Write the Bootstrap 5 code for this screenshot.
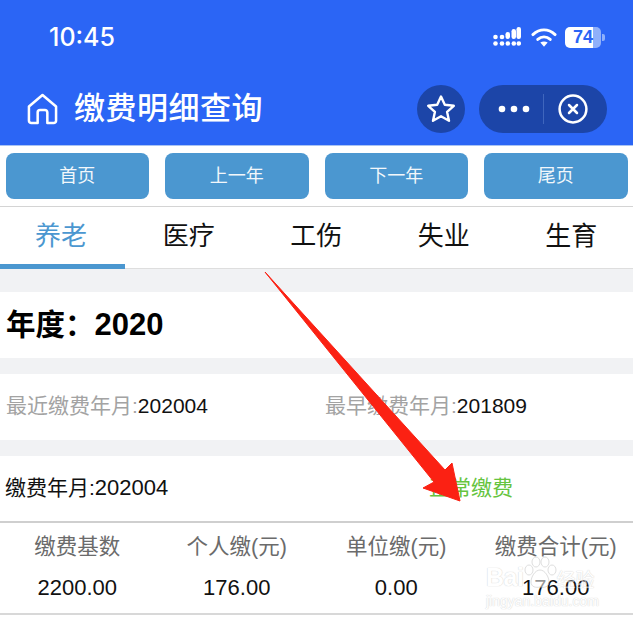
<!DOCTYPE html>
<html lang="zh-CN">
<head>
    <meta charset="UTF-8">
    <meta name="viewport" content="width=device-width, initial-scale=1.0">
    <title>缴费明细查询</title>
    <link href="https://cdn.jsdelivr.net/npm/bootstrap@5.3.0/dist/css/bootstrap.min.css" rel="stylesheet">
    <style>
        html, body { margin: 0; background: #fff; }
        body { font-family: "Liberation Sans", "Noto Sans CJK SC", sans-serif; color: #111; overflow: hidden; }
        .page-wrap { width: 633px; height: 624px; overflow: hidden; }
        .top-blue { height: 145px; background: #2b65f5; color: #fff; }
        .status-row { height: 74px; padding: 21px 28px 0 49px; }
        .clock { font-family: "Inter", "Liberation Sans", sans-serif; font-size: 25px; line-height: 32px; font-weight: 500; }
        .signal-ico { margin-right: 2px; }
        .battery { width: 36px; height: 21px; border-radius: 5px; background: linear-gradient(90deg, #fff 0, #fff 78%, #8fb0fa 78%); color: #2b65f5; font-size: 18px; line-height: 21px; font-weight: 700; text-align: center; }
        .battery-tip { width: 3px; height: 7px; background: #8fb0fa; border-radius: 0 2px 2px 0; margin-left: 1px; }
        .title-row { height: 71px; padding: 0 26px 1px 27px; }
        .page-name { font-size: 31px; line-height: 50px; font-weight: 500; margin-left: 16px; letter-spacing: .5px; }
        .fav-pill { width: 48px; height: 48px; border-radius: 50%; background: #1c45a8; }
        .menu-pill { width: 128px; height: 48px; border-radius: 24px; background: #1c45a8; margin-left: 14px; padding: 0 19px 0 19px; }
        .pill-sep { width: 1px; height: 30px; background: #3f66bd; margin: 0 14px 0 13px; }
        .tool-btns { height: 62px; padding: 7px 5.500px 0 5.500px; border-top: 1px solid #a9c3f3; border-bottom: 1px solid #d4d4d4; }
        .tool-btn { width: 143.500px; height: 46px; line-height: 46px; padding: 0; border: 0; border-radius: 8px; background: #4b97d0; color: #f2f7fb; font-size: 18px; text-align: center; }
        .tab-row { height: 62px; border-bottom: 1px solid #dedede; }
        .tab-cell { flex: 0 0 127.500px; font-size: 26px; line-height: 58px; text-align: center; color: #111; }
        .tab-cell.on { flex-basis: 125px; height: 62px; color: #4b97d0; border-bottom: 5px solid #4b97d0; padding-right: 3px; }
        .gap-band { background: #f1f2f4; }
        .gap-a { height: 23px; }
        .gap-b { height: 16px; }
        .year-row { height: 66px; padding-left: 6px; font-size: 29.500px; line-height: 66px; font-weight: 700; color: #000; }
        .year-num { font-size: 31px; }
        .month-row { height: 66px; padding: 17px 0 0 6px; font-size: 21px; line-height: 30px; color: #111; }
        .month-row > div { flex: 0 0 319px; }
        .dim-text { color: #a3a3a3; }
        .pay-row { height: 65px; padding: 17px 0 0 5px; font-size: 21px; line-height: 30px; color: #111; }
        .pay-num { font-size: 22px; }
        .pay-date { flex: 0 0 424px; }
        .pay-state { color: #66c43f; font-size: 21px; }
        .fee-table { height: 94px; border-top: 2px solid #cfcfcf; border-bottom: 2px solid #d8d8d8; font-size: 21.500px; }
        .fee-col { flex: 0 0 159.500px; text-align: center; white-space: nowrap; }
        .fee-col:first-child { margin-left: -2.500px; }
        .fee-head { color: #6b6b6b; line-height: 30px; padding-top: 9px; height: 46px; }
        .fee-val { color: #111; line-height: 30px; font-size: 22px; padding-top: 4px; }
        .arrow-over { position: absolute; left: 0; top: 0; pointer-events: none; }
        .mark-over { position: absolute; left: 486px; top: 556px; width: 114px; color: #fff; pointer-events: none; line-height: 1; text-shadow: 0 0 1px #bbb, 0 0 1px #bbb; opacity: .55; }
        .mark-big { font-size: 25px; font-weight: 700; letter-spacing: -.5px; margin-right: -2px; }
        .mark-cn { font-size: 19px; margin-left: -1px; }
        .mark-small { font-size: 14px; margin-top: 4px; white-space: nowrap; }
    </style>
</head>
<body>
    <div class="page-wrap position-relative">
        <div class="top-blue">
            <div class="status-row d-flex justify-content-between">
                <div class="clock">10:45</div>
                <div class="d-flex align-items-center" style="height: 32px">
                    <svg class="signal-ico" width="28" height="22" viewBox="0 0 28 22" fill="#fff">
                        <circle cx="2.500" cy="11" r="2.300"/><circle cx="2.500" cy="17.500" r="2.300"/>
                        <circle cx="9" cy="11" r="2.300"/><circle cx="9" cy="17.500" r="2.300"/>
                        <rect x="12.500" y="6" width="4.500" height="7" rx="2.200"/><circle cx="14.800" cy="17.500" r="2.300"/>
                        <rect x="18.500" y="3" width="4.500" height="10" rx="2.200"/><circle cx="20.800" cy="17.500" r="2.300"/>
                        <rect x="23.500" y="1" width="4.500" height="12" rx="2.200"/><circle cx="25.800" cy="17.500" r="2.300"/>
                    </svg>
                    <svg class="ms-2" width="26" height="21" viewBox="0 0 27 21" fill="none" stroke="#fff" stroke-width="3" stroke-linecap="round">
                        <path d="M2 7.500C9 1 18 1 25 7.500"/>
                        <path d="M7 12.500C11 9 16 9 20 12.500"/>
                        <path d="M13.500 20l-3.800-4.200c2.300-1.600 5.300-1.600 7.600 0z" fill="#fff" stroke="none"/>
                    </svg>
                    <div class="battery ms-2">74</div>
                    <div class="battery-tip"></div>
                </div>
            </div>
            <div class="title-row d-flex align-items-center">
                <svg width="31" height="32" viewBox="0 0 32 33" fill="none" stroke="#fff" stroke-width="2.600" stroke-linejoin="round" stroke-linecap="round">
                    <path d="M2 14L16 2l14 12v14.500a2.500 2.500 0 0 1-2.500 2.500H21V20a2.500 2.500 0 0 0-2.500-2.500h-5A2.500 2.500 0 0 0 11 20v11H4.500A2.500 2.500 0 0 1 2 28.500z"/>
                </svg>
                <div class="page-name">缴费明细查询</div>
                <div class="ms-auto d-flex">
                    <div class="fav-pill d-flex align-items-center justify-content-center">
                        <svg width="30" height="30" viewBox="0 0 30 30" fill="none" stroke="#fff" stroke-width="2.400" stroke-linejoin="round">
                            <path d="M15 2.500l3.800 8.300 9 1-6.700 6.100 1.900 8.900-8-4.500-8 4.500 1.900-8.900-6.700-6.100 9-1z"/>
                        </svg>
                    </div>
                    <div class="menu-pill d-flex align-items-center">
                        <svg width="32" height="8" viewBox="0 0 32 8" fill="#fff"><circle cx="4" cy="4" r="3.300"/><circle cx="16" cy="4" r="3.300"/><circle cx="28" cy="4" r="3.300"/></svg>
                        <div class="pill-sep"></div>
                        <svg width="30" height="30" viewBox="0 0 30 30" fill="none" stroke="#fff" stroke-width="2.500" stroke-linecap="round">
                            <circle cx="15" cy="15" r="13.400"/><path d="M11 11l8 8M19 11l-8 8"/>
                        </svg>
                    </div>
                </div>
            </div>
        </div>

        <div class="tool-btns d-flex justify-content-between">
            <button type="button" class="tool-btn">首页</button>
            <button type="button" class="tool-btn">上一年</button>
            <button type="button" class="tool-btn">下一年</button>
            <button type="button" class="tool-btn">尾页</button>
        </div>

        <div class="tab-row d-flex">
            <div class="tab-cell on">养老</div>
            <div class="tab-cell">医疗</div>
            <div class="tab-cell">工伤</div>
            <div class="tab-cell">失业</div>
            <div class="tab-cell">生育</div>
        </div>

        <div class="gap-band gap-a"></div>
        <div class="year-row">年度：<span class="year-num">2020</span></div>
        <div class="gap-band gap-b"></div>
        <div class="month-row d-flex">
            <div><span class="dim-text">最近缴费年月:</span>202004</div>
            <div><span class="dim-text">最早缴费年月:</span>201809</div>
        </div>
        <div class="gap-band gap-b"></div>
        <div class="pay-row d-flex">
            <div class="pay-date">缴费年月:<span class="pay-num">202004</span></div>
            <div class="pay-state">正常缴费</div>
        </div>
        <div class="fee-table d-flex">
            <div class="fee-col"><div class="fee-head">缴费基数</div><div class="fee-val">2200.00</div></div>
            <div class="fee-col"><div class="fee-head">个人缴(元)</div><div class="fee-val">176.00</div></div>
            <div class="fee-col"><div class="fee-head">单位缴(元)</div><div class="fee-val">0.00</div></div>
            <div class="fee-col"><div class="fee-head">缴费合计(元)</div><div class="fee-val">176.00</div></div>
        </div>

        <svg class="arrow-over" width="633" height="624" viewBox="0 0 633 624">
            <path d="M265 272L445 470L452 463L460 501L423 488L434 482z" fill="#fb2113" stroke="#fb2113" stroke-width="1" stroke-linejoin="round"/>
        </svg>
        <div class="mark-over">
            <div class="d-flex align-items-end">
                <div class="mark-big">Bai</div>
                <svg width="36" height="34" viewBox="0 0 36 34" fill="#fff" stroke="#c4c4c4" stroke-width="1">
                    <ellipse cx="8" cy="14" rx="4" ry="5"/><ellipse cx="15" cy="6" rx="4" ry="5"/><ellipse cx="24" cy="6" rx="4" ry="5"/><ellipse cx="31" cy="14" rx="4" ry="5"/>
                    <path d="M19 14c5 0 9 7 9 12 0 5-5 6-9 5-4 1-9 0-9-5 0-5 4-12 9-12z"/>
                </svg>
                <div class="mark-cn">经验</div>
            </div>
            <div class="mark-small">jingyan.baidu.com</div>
        </div>
    </div>
    <script src="https://cdn.jsdelivr.net/npm/bootstrap@5.3.0/dist/js/bootstrap.bundle.min.js"></script>
</body>
</html>
